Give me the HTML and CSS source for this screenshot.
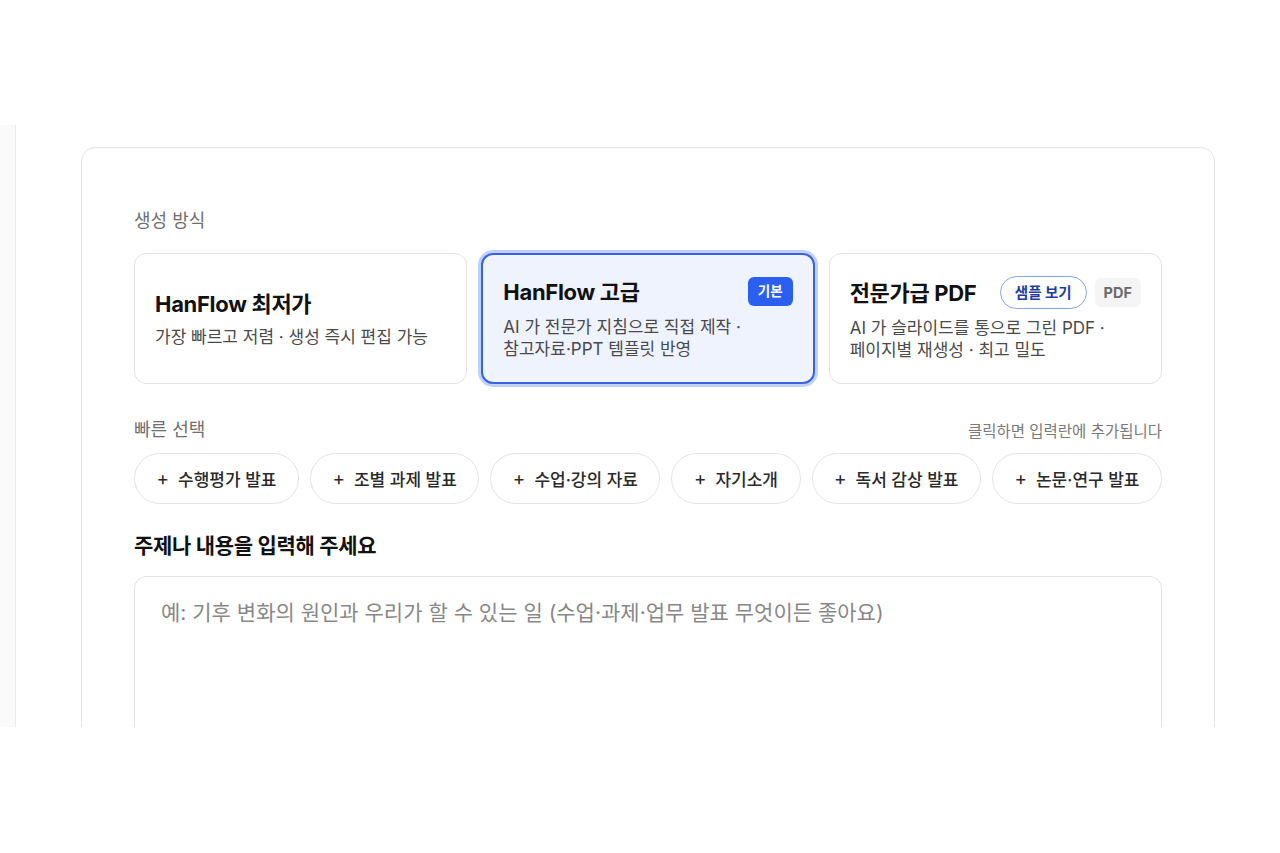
FILE: index.html
```html
<!DOCTYPE html>
<html lang="ko">
<head>
<meta charset="utf-8">
<title>HanFlow</title>
<link rel="stylesheet" href="styles.css">
</head>
<body>
<div class="frame">
  <aside class="rail"></aside>
  <main class="main">
    <section class="panel">
      <div class="label">생성 방식</div>
      <div class="modes">
        <div class="mode">
          <div class="mode-head"><span class="mode-title">HanFlow 최저가</span></div>
          <div class="mode-desc">가장 빠르고 저렴 · 생성 즉시 편집 가능</div>
        </div>
        <div class="mode selected">
          <div class="mode-head"><span class="mode-title">HanFlow 고급</span><span class="badge">기본</span></div>
          <div class="mode-desc">AI 가 전문가 지침으로 직접 제작 ·<br>참고자료·PPT 템플릿 반영</div>
        </div>
        <div class="mode">
          <div class="mode-head"><span class="mode-title">전문가급 PDF</span><span class="tags"><span class="sample">샘플 보기</span><span class="tag">PDF</span></span></div>
          <div class="mode-desc">AI 가 슬라이드를 통으로 그린 PDF ·<br>페이지별 재생성 · 최고 밀도</div>
        </div>
      </div>
      <div class="quick-head">
        <span class="label">빠른 선택</span>
        <span class="hint">클릭하면 입력란에 추가됩니다</span>
      </div>
      <div class="chips">
        <span class="chip"><span class="plus">+</span>수행평가 발표</span>
        <span class="chip"><span class="plus">+</span>조별 과제 발표</span>
        <span class="chip"><span class="plus">+</span>수업·강의 자료</span>
        <span class="chip"><span class="plus">+</span>자기소개</span>
        <span class="chip"><span class="plus">+</span>독서 감상 발표</span>
        <span class="chip"><span class="plus">+</span>논문·연구 발표</span>
      </div>
      <h2 class="topic-title">주제나 내용을 입력해 주세요</h2>
      <div class="input-box">
        <div class="placeholder">예: 기후 변화의 원인과 우리가 할 수 있는 일 (수업·과제·업무 발표 무엇이든 좋아요)</div>
      </div>
    </section>
  </main>
</div>
</body>
</html>
```

FILE: styles.css
```css
* { box-sizing: border-box; }
html, body { margin: 0; padding: 0; background: #fff; }
body {
  font-family: "Inter", "Noto Sans CJK KR", sans-serif;
  color: #111;
  padding-top: 125px;
}
.frame {
  display: flex;
  height: 602px;
  overflow: hidden;
}
.rail {
  width: 16px;
  flex: none;
  background: #fafafa;
  border-right: 1px solid #ebebeb;
}
.main {
  flex: 1;
  padding: 22px 65px 0 65px;
}
.panel {
  border: 1px solid #e4e4e4;
  border-radius: 14px;
  padding: 61px 52px 40px 52px;
  background: #fff;
  min-height: 700px;
}
.label {
  font-size: 18px;
  line-height: 24px;
  color: #6f6f6f;
}
.modes {
  display: grid;
  grid-template-columns: 1fr 1fr 1fr;
  gap: 14px;
  margin-top: 20px;
}
.mode {
  height: 131px;
  border: 1.5px solid #e3e3e3;
  border-radius: 12px;
  padding: 0 20px;
  display: flex;
  flex-direction: column;
  justify-content: center;
  background: #fff;
}
.mode.selected {
  border: 2px solid #3a62de;
  background: #eef3fe;
  box-shadow: 0 0 0 3px #c0d1fb;
}
.mode-head {
  display: flex;
  align-items: center;
  justify-content: space-between;
  min-height: 28px;
}
.mode-title {
  font-size: 22px;
  font-weight: 700;
  letter-spacing: -0.3px;
  line-height: 28px;
  color: #111;
}
.mode-desc {
  margin-top: 8px;
  font-size: 17px;
  line-height: 22px;
  color: #4a4a4a;
}
.mode.selected .mode-desc { margin-top: 10px; }
.badge {
  background: #2b5ff2;
  color: #fff;
  font-size: 13.5px;
  font-weight: 700;
  line-height: 29px;
  padding: 0 10px;
  border-radius: 6px;
}
.tags { display: flex; align-items: center; gap: 8px; }
.sample {
  border: 1.5px solid #8aa4e8;
  border-radius: 17px;
  color: #1f3ea3;
  font-size: 14.5px;
  font-weight: 700;
  line-height: 31px;
  padding: 0 14px;
}
.tag {
  background: #f5f5f5;
  color: #6a6a6a;
  font-size: 14.5px;
  font-weight: 700;
  line-height: 29px;
  padding: 0 9px;
  border-radius: 6px;
}
.quick-head {
  display: flex;
  justify-content: space-between;
  align-items: center;
  margin-top: 34px;
}
.hint {
  font-size: 15.5px;
  color: #7a7a7a;
}
.chips {
  display: flex;
  gap: 11px;
  margin-top: 11px;
}
.chip {
  flex: 1 1 auto;
  height: 51px;
  border: 1.5px solid #e4e4e4;
  border-radius: 26px;
  display: flex;
  align-items: center;
  justify-content: center;
  font-size: 17px;
  font-weight: 500;
  color: #2a2a2a;
  white-space: nowrap;
  padding: 0 16px;
}
.plus {
  font-size: 19px;
  font-weight: 400;
  margin-right: 9px;
  color: #2a2a2a;
}
.topic-title {
  margin: 28px 0 0 0;
  font-size: 21px;
  line-height: 28px;
  font-weight: 700;
  color: #111;
  letter-spacing: -0.3px;
}
.input-box {
  margin-top: 16px;
  border: 1.5px solid #e3e3e3;
  border-radius: 12px;
  height: 240px;
  padding: 22px 26px;
}
.placeholder {
  font-size: 21px;
  line-height: 28px;
  color: #888;
}
```
